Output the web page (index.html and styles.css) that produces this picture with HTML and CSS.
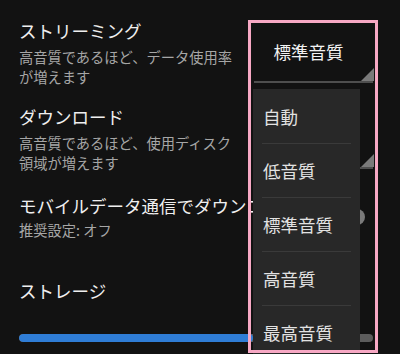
FILE: index.html
```html
<!DOCTYPE html>
<html lang="ja">
<head>
<meta charset="utf-8">
<link rel="stylesheet" href="styles.css">
</head>
<body>
<div class="screen">
  <div class="settings">
    <div class="row row-stream">
      <div class="text">
        <div class="title">ストリーミング</div>
        <div class="desc">高音質であるほど、データ使用率が増えます</div>
      </div>
      <div class="control select">
        <span class="select-value">標準音質</span>
        <span class="select-arrow"></span>
      </div>
    </div>
    <div class="row row-download">
      <div class="text">
        <div class="title">ダウンロード</div>
        <div class="desc">高音質であるほど、使用ディスク領域が増えます</div>
      </div>
      <div class="control select">
        <span class="select-value">標準音質</span>
        <span class="select-arrow"></span>
      </div>
    </div>
    <div class="row row-mobile">
      <div class="text">
        <div class="title clipped">モバイルデータ通信でダウンロード</div>
        <div class="desc desc-tight">推奨設定: オフ</div>
      </div>
      <div class="control toggle">
        <span class="thumb"></span>
      </div>
    </div>
    <div class="section">
      <div class="title">ストレージ</div>
      <div class="bar"><div class="bar-fill" style="width:66%"></div></div>
    </div>
  </div>

  <ul class="menu">
    <li class="menu-item">自動</li>
    <li class="menu-item">低音質</li>
    <li class="menu-item">標準音質</li>
    <li class="menu-item">高音質</li>
    <li class="menu-item">最高音質</li>
  </ul>
  <div class="highlight"></div>
</div>
</body>
</html>
```

FILE: styles.css
```css
html, body {
  margin: 0;
  padding: 0;
  background: #121212;
}
body {
  width: 400px;
  height: 354px;
  overflow: hidden;
  font-family: "Noto Sans CJK JP", "Noto Sans", sans-serif;
  color: #ececec;
}
.screen {
  position: relative;
  width: 400px;
  height: 354px;
  overflow: hidden;
}
.settings {
  padding: 19px 27px 0 19px;
}
.row {
  display: flex;
  align-items: center;
  gap: 14px;
}
.row-download { margin-top: 18px; }
.row-mobile { margin-top: 21px; }
.text {
  flex: 1;
  min-width: 0;
}
.title {
  font-size: 17.5px;
  line-height: 24px;
  color: #efefef;
}
.clipped {
  white-space: nowrap;
  overflow: hidden;
  margin-right: -13px;
}
.desc {
  margin-top: 4px;
  font-size: 14.25px;
  line-height: 20px;
  color: #a6a6a6;
}
.desc-tight { margin-top: 2px; }
.control {
  flex: none;
  width: 119px;
}
.select {
  position: relative;
  border-bottom: 2px solid #4e4e4e;
  display: flex;
  align-items: center;
  justify-content: center;
  padding-right: 10px;
  box-sizing: border-box;
  height: 59px;
}
.select-value {
  font-size: 17.5px;
  line-height: 24px;
  color: #f2f2f2;
}
.select-arrow {
  position: absolute;
  right: -1px;
  bottom: 0;
  width: 0;
  height: 0;
  border-left: 13px solid transparent;
  border-bottom: 13px solid #7a7a7a;
}
.toggle {
  height: 24px;
  display: flex;
  align-items: center;
}
.thumb {
  width: 16px;
  height: 16px;
  border-radius: 50%;
  background: #7a7a7a;
  margin-left: 95px;
}
.section {
  margin-top: 39px;
}
.bar {
  margin-top: 31px;
  height: 8px;
  border-radius: 4px;
  background: #5c5c5c;
  overflow: hidden;
}
.bar-fill {
  height: 100%;
  background: #2f7dd6;
  border-radius: 4px;
}
.menu {
  position: absolute;
  left: 253px;
  top: 89px;
  width: 107px;
  margin: 0;
  padding: 0;
  list-style: none;
  background: #282828;
}
.menu-item {
  height: 54px;
  box-sizing: border-box;
  padding: 0 9px 0 10px;
  display: flex;
  align-items: center;
  font-size: 17.5px;
  color: #e2e2e2;
  position: relative;
}
.menu-item + .menu-item::before {
  content: "";
  position: absolute;
  top: 0;
  left: 9px;
  right: 9px;
  height: 1px;
  background: #3a3a3a;
}
.highlight {
  position: absolute;
  left: 248px;
  top: 20px;
  width: 124px;
  height: 327px;
  border: 3px solid #f7a8c4;
  pointer-events: none;
}
```
